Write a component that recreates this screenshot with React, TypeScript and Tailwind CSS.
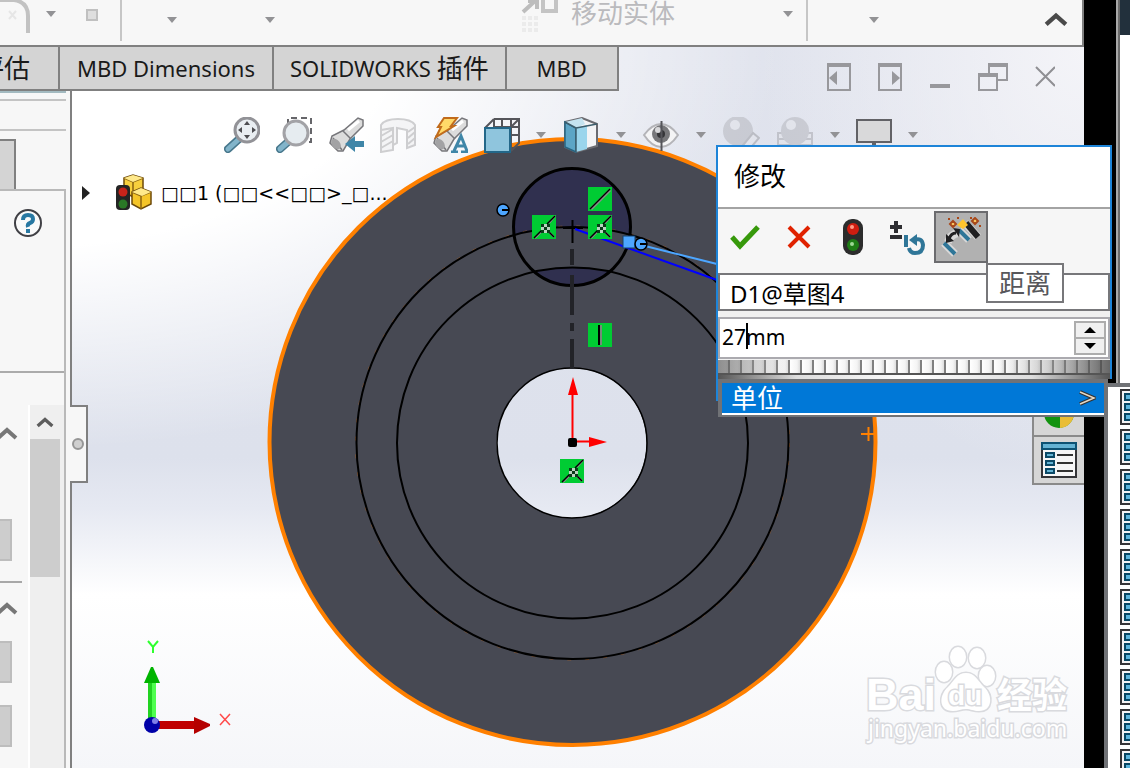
import { useState, type ReactNode } from "react";

const UNIT_ROWS = Array.from({ length: 10 }, (_, i) => i);

function DropArrow({ label }: { label: string }) {
  return (
    <button type="button" aria-label={label} className="grid h-9 w-[10px] shrink-0 place-items-center">
      <svg width="10" height="6" viewBox="0 0 10 6" aria-hidden="true">
        <path d="M0 0h10L5 6z" fill="#929295" />
      </svg>
    </button>
  );
}

function Chevron({ color = "#777", size = 22 }: { color?: string; size?: number }) {
  return (
    <svg width={size} height={size} viewBox="0 0 22 22" fill="none" stroke={color} strokeWidth="4" aria-hidden="true">
      <path d="M2 16l9-8 9 8" />
    </svg>
  );
}

function TrafficLight({ className }: { className?: string }) {
  return (
    <svg viewBox="0 0 20 36" className={className} aria-hidden="true">
      <rect x="0" y="0" width="20" height="36" rx="9" fill="#2c2c2c" />
      <circle cx="10" cy="10" r="6" fill="#cf1d10" />
      <circle cx="9" cy="8" r="2" fill="#ff9b86" />
      <circle cx="10" cy="26" r="6" fill="#1f7d16" />
      <circle cx="9" cy="25" r="2" fill="#9fd896" />
    </svg>
  );
}

function UnitListIcon() {
  return (
    <svg width="36" height="36" viewBox="0 0 36 36" className="shrink-0" aria-hidden="true">
      <rect x="1" y="1" width="34" height="34" fill="#f2f2f4" stroke="#333337" strokeWidth="2" />
      {[5, 15, 25].map((y) => (
        <g key={y}>
          <rect x="5" y={y} width="10" height="6" fill="#5bb4dc" stroke="#074663" strokeWidth="2" />
          <path d={`M19 ${y + 3}h13`} stroke="#333" strokeWidth="2" />
        </g>
      ))}
    </svg>
  );
}

function Ribbon() {
  return (
    <div className="flex h-[47px] shrink-0 overflow-hidden border-r-2 border-b-2 border-[#808080] bg-[#f7f7f7]">
      <div className="flex h-[41px] w-[122px] shrink-0 border-r-2 border-[#c6c6c6]">
        <svg width="46" height="34" viewBox="0 0 46 34" className="shrink-0" fill="none" aria-hidden="true">
          <path d="M0 0h14q14 2 14 16v17" stroke="#c2c2c2" strokeWidth="4" />
          <path d="M9 11l7 8M16 11l-7 8" stroke="#e6e6e6" strokeWidth="2" />
        </svg>
        <div className="-mt-1">
          <DropArrow label="更多草图工具" />
        </div>
        <span className="mt-[9px] ml-[30px] h-3 w-3 border-2 border-[#c0c0c0] bg-[#dedede]" />
      </div>
      <div className="flex h-[41px] min-w-0 flex-1 border-r-2 border-[#c6c6c6] pr-[13px] pl-[45px]">
        <div className="mt-0.5 flex gap-[88px]">
          <DropArrow label="草图命令" />
          <DropArrow label="剪裁命令" />
        </div>
        <svg width="40" height="34" viewBox="0 0 40 34" className="ml-[246px] shrink-0" aria-hidden="true">
          <path d="M2 12L14 1M7 1h9v8" fill="none" stroke="#bdbdbd" strokeWidth="4" />
          <rect x="22" y="-2" width="13" height="13" fill="#f7f7f7" stroke="#c4c4c4" strokeWidth="4" />
          <path d="M1 18h17M1 24h17M1 30h17" stroke="#ebebeb" strokeWidth="4" strokeDasharray="4 2" />
        </svg>
        <button
          type="button"
          className="ml-[10px] h-6 shrink-0 font-['Noto_Sans_CJK_SC',sans-serif] text-[26px] leading-6 text-[#bababd]"
        >
          移动实体
        </button>
        <div className="-mt-1 ml-auto">
          <DropArrow label="移动实体选项" />
        </div>
      </div>
      <div className="flex w-[274px] shrink-0 justify-between pr-[14px] pl-[61px]">
        <div className="mt-0.5">
          <DropArrow label="快速草图" />
        </div>
        <button type="button" aria-label="折叠功能区" className="mt-[7px] h-6">
          <Chevron color="#4a4a4a" size={24} />
        </button>
      </div>
    </div>
  );
}

function TabRow() {
  return (
    <div className="flex h-11 shrink-0">
      <div className="flex border-b-2 border-[#808080] bg-[#d4d4d4] font-['Noto_Sans','Noto_Sans_CJK_SC',sans-serif] text-[22px] leading-[42px] whitespace-nowrap text-[#1a1a1a]">
        <button
          type="button"
          className="flex w-[60px] justify-end overflow-hidden border-r-2 border-[#808080] pr-7 text-[26px]"
        >
          评估
        </button>
        <button type="button" className="border-r-2 border-[#808080] px-[17px]">
          MBD Dimensions
        </button>
        <button type="button" className="flex border-r-2 border-[#808080] px-4">
          SOLIDWORKS&nbsp;<span className="text-[26px]">插件</span>
        </button>
        <button type="button" className="w-28 border-r-2 border-[#808080] text-center">
          MBD
        </button>
      </div>
      <div className="ml-auto flex items-start gap-[27px] pt-4 pr-[29px]">
        <button type="button" aria-label="上一个窗口">
          <svg width="24" height="28" viewBox="0 0 24 28" fill="none" stroke="#98989c" strokeWidth="2" aria-hidden="true">
            <path d="M1 1h22v26H1zM1 3h22" />
            <path d="M2 15l8-7v14z" fill="#98989c" stroke="none" />
          </svg>
        </button>
        <button type="button" aria-label="下一个窗口">
          <svg width="24" height="28" viewBox="0 0 24 28" fill="none" stroke="#98989c" strokeWidth="2" aria-hidden="true">
            <path d="M1 1h22v26H1zM1 3h22" />
            <path d="M22 15l-8-7v14z" fill="#98989c" stroke="none" />
          </svg>
        </button>
        <button type="button" aria-label="最小化">
          <svg width="22" height="28" viewBox="0 0 22 28" aria-hidden="true">
            <path d="M1 21h20v4H1z" fill="#98989c" />
          </svg>
        </button>
        <button type="button" aria-label="还原">
          <svg width="30" height="28" viewBox="0 0 30 28" fill="none" stroke="#98989c" strokeWidth="2" aria-hidden="true">
            <path d="M11 10V1h18v16h-9M10 3h19" />
            <path d="M1 11h18v16H1zM1 13h18" />
          </svg>
        </button>
        <button type="button" aria-label="关闭">
          <svg width="20" height="28" viewBox="0 0 20 28" fill="none" stroke="#8f8f93" strokeWidth="2" aria-hidden="true">
            <path d="M1 4l19 19M20 4L1 23" />
          </svg>
        </button>
      </div>
    </div>
  );
}

function SpinBox() {
  return <div className="h-[42px] w-3 border-2 border-l-0 border-[#bdbdbd] bg-[#cdcdcd]" />;
}

function SidePanel() {
  return (
    <aside className="relative flex w-[72px] shrink-0 flex-col border-r-2 border-[#808080] bg-[#f7f7f7]">
      <div className="mr-1 h-[10px] border-t-2 border-b-2 border-t-[#a3bac0] border-b-[#c4c4c4]" />
      <div className="mr-1 h-[30px] border-b-2 border-[#c4c4c4]" />
      <div className="mt-2 h-[52px] w-4 border-2 border-b-0 border-l-0 border-[#808080] bg-[#d4d4d4]" />
      <div className="-mt-0.5 mr-1 flex min-h-0 flex-1 flex-col border-t-2 border-r-2 border-[#b9b9b9]">
        <div className="h-[182px] shrink-0 border-b-2 border-[#ababab] pt-[17px] pl-[13px]">
          <button type="button" aria-label="帮助">
            <svg width="30" height="30" viewBox="0 0 30 30" aria-hidden="true">
              <circle cx="15" cy="15" r="13" fill="#fafafa" stroke="#404045" strokeWidth="2" />
              <path d="M10 12q0-5 5-5t5 4q0 3-3 4t-2 4" fill="none" stroke="#2878a2" strokeWidth="4" />
              <rect x="13" y="21" width="4" height="4" fill="#2878a2" />
            </svg>
          </button>
        </div>
        <div className="mt-8 flex min-h-0 flex-1">
          <div className="flex w-7 shrink-0 flex-col">
            <div className="mt-[17px] -ml-1 h-[22px]">
              <Chevron />
            </div>
            <div className="mt-[75px]">
              <SpinBox />
            </div>
            <div className="mt-5 h-0.5 w-[22px] bg-[#a8a8a8]" />
            <div className="mt-[14px] -ml-1 h-[22px]">
              <Chevron />
            </div>
            <div className="mt-[22px] flex flex-col gap-[22px]">
              <SpinBox />
              <SpinBox />
            </div>
          </div>
          <div className="flex flex-1 flex-col border-l-2 border-white bg-[#efefef]">
            <button type="button" aria-label="向上滚动" className="grid h-[34px] place-items-center pr-1">
              <Chevron color="#5c5c5c" size={18} />
            </button>
            <div className="mr-1 h-[138px] bg-[#cdcdcd]" />
          </div>
        </div>
      </div>
      <button
        type="button"
        aria-label="折叠面板"
        className="absolute top-[314px] left-[70px] z-10 flex h-[78px] w-[18px] items-center border-2 border-l-0 border-[#808080] bg-[#f7f7f7] pl-0.5"
      >
        <span className="h-3 w-3 rounded-full border-2 border-[#969696] bg-[#cfcfcf]" />
      </button>
    </aside>
  );
}

function Relation({ x, y, kind }: { x: number; y: number; kind: "coincident" | "vertical" | "line" }) {
  return (
    <g transform={`translate(${x} ${y})`}>
      <rect width="24" height="24" fill="#00cc33" />
      {kind === "vertical" && (
        <>
          <path d="M13 2v20" stroke="#77887a" strokeWidth="2" />
          <path d="M11 2v20" stroke="#000" strokeWidth="2" />
        </>
      )}
      {kind === "line" && (
        <>
          <path d="M3 22L22 3" stroke="#8a8a8a" strokeWidth="3" />
          <path d="M2 22L22 2" stroke="#000" strokeWidth="1.5" />
        </>
      )}
      {kind === "coincident" && (
        <>
          <path d="M3 23l6-6M17 8l6-7M17 17l5 5" stroke="#8a8a8a" strokeWidth="2" />
          <path d="M2 23l8-8M15 9l8-8M16 16l6 6" stroke="#000" strokeWidth="1.5" />
          <rect x="9" y="9" width="9" height="9" fill="#0a3a18" />
          <path d="M12 9h3v3h3v3h-3v3h-3v-3H9v-3h3z" fill="#b9d2bf" />
          <rect x="12" y="12" width="3" height="3" fill="#0a3a18" />
        </>
      )}
    </g>
  );
}

function Handle({ x, y }: { x: number; y: number }) {
  return (
    <g>
      <circle cx={x} cy={y} r="6" fill="#4da6ff" stroke="#000" strokeWidth="1.5" />
      <path d={`M${x - 1} ${y}h7`} stroke="#000" strokeWidth="2" />
    </g>
  );
}

function Sketch() {
  return (
    <svg
      width="1012"
      height="677"
      viewBox="72 91 1012 677"
      className="absolute top-0 left-0"
      role="img"
      aria-label="草图4"
    >
      <defs>
        <clipPath id="small">
          <circle cx="572" cy="227" r="58" />
        </clipPath>
      </defs>
      <path
        d="M572 140a302 302 0 1 0 1 0zM572 368a75 75 0 1 1-1 0z"
        fill="#474953"
        fillRule="evenodd"
      />
      <circle cx="572.5" cy="442" r="303" fill="none" stroke="#ff8000" strokeWidth="4" />
      <circle cx="572" cy="227" r="58" fill="#30304f" />
      <g clipPath="url(#small)">
        <circle cx="572.5" cy="443" r="216" fill="#474953" />
        <circle cx="572.5" cy="443" r="175.5" fill="#30304f" />
      </g>
      <g fill="none" stroke="#000">
        <circle cx="572" cy="443" r="75" strokeWidth="1.5" />
        <circle cx="572.5" cy="443" r="175.5" strokeWidth="2" />
        <circle cx="572.5" cy="443" r="217" stroke="#8b5a34" strokeWidth="1" strokeDasharray="4 14" />
        <circle cx="572.5" cy="443" r="216" strokeWidth="2" />
        <circle cx="572" cy="227" r="58.5" strokeWidth="3" />
      </g>
      <path d="M572 249v16M572 275v40M572 323v8M572 339v30" stroke="#222328" strokeWidth="4" />
      <path d="M572.5 220v23M563 228h20" stroke="#000" strokeWidth="2" />
      <path d="M575 229l142 51" stroke="#0000ff" strokeWidth="2" />
      <path d="M645 246l72 18" stroke="#4da6ff" strokeWidth="2" />
      <rect x="623" y="236" width="12" height="12" fill="#4da6ff" stroke="#17406b" />
      <Handle x={641} y={244} />
      <Handle x={503} y={210} />
      <Relation x={532} y={215} kind="coincident" />
      <Relation x={588} y={187} kind="line" />
      <Relation x={588} y={215} kind="coincident" />
      <Relation x={588} y={323} kind="vertical" />
      <Relation x={560} y={459} kind="coincident" />
      <path d="M572.5 441V390M573 441.5h20" stroke="#f00" strokeWidth="2" />
      <path d="M568 395l5-18 5 18zM589 437l18 5-18 5z" fill="#f00" />
      <rect x="568" y="438" width="9" height="9" rx="2" fill="#000" />
      <path d="M861 434h14M868.5 427v14" stroke="#ff8000" strokeWidth="2" />

      {/* axis triad */}
      <path d="M148 682h8v38h-8z" fill="#21d321" />
      <path d="M152 682h4v38h-4z" fill="#4fff4f" />
      <path d="M144 683l7-16h2l7 16z" fill="#00b400" />
      <path d="M158 721h38v8h-38z" fill="#c00000" />
      <path d="M194 717l16 7v2l-16 8z" fill="#b50000" />
      <circle cx="152" cy="725" r="8" fill="#0000a8" />
      <circle cx="155" cy="721" r="3" fill="#7f7fe8" />
      <path d="M148 641l5 6 5-6M153 647v6" fill="none" stroke="#2fff2f" strokeWidth="2" />
      <path d="M220 714l10 11M230 714l-10 11" stroke="#ff4a4a" strokeWidth="1.5" />

      {/* watermark */}
      <g fill="#fff" stroke="#d9dade" strokeWidth="3" className="[paint-order:stroke]">
        <text x="866" y="710" fontFamily="Liberation Sans, sans-serif" fontWeight="700" fontSize="45">
          Bai
        </text>
        <ellipse cx="944" cy="672" rx="8" ry="10" />
        <ellipse cx="958" cy="657" rx="8" ry="10" />
        <ellipse cx="977" cy="658" rx="8" ry="10" />
        <ellipse cx="987" cy="676" rx="8" ry="10" />
        <path d="M966 673c9 0 12 8 18 14 9 8 9 24-5 24-6 0-8-2-13-2s-8 2-13 2c-15 0-14-16-5-24 6-6 9-14 18-14z" />
        <text x="948" y="705" fontFamily="Liberation Sans, sans-serif" fontWeight="700" fontSize="28">
          du
        </text>
        <text x="997" y="708" fontFamily="Noto Sans CJK SC, sans-serif" fontWeight="700" fontSize="35">
          经验
        </text>
        <text x="868" y="737" fontFamily="Noto Sans, sans-serif" fontSize="23">
          jingyan.baidu.com
        </text>
      </g>
    </svg>
  );
}

type ViewButtonProps = { label: string; wide?: boolean; faded?: boolean; children: ReactNode };

function ViewButton({ label, wide, faded, children }: ViewButtonProps) {
  return (
    <button type="button" aria-label={label} className={faded ? "shrink-0 opacity-35" : "shrink-0"}>
      <svg width={wide ? 38 : 36} height="36" viewBox="0 0 36 36" fill="none" aria-hidden="true">
        {children}
      </svg>
    </button>
  );
}

function Flashlight() {
  return (
    <>
      <path d="M2 26l2-7 12-6 14-12 5 2v6L22 22l-7 12h-5z" fill="#dcdcdc" stroke="#77777b" strokeWidth="1.5" />
      <path d="M5 21l9 12M15 14l8 8" stroke="#77777b" strokeWidth="1.5" />
      <path d="M20 13L31 4" stroke="#fff" strokeWidth="3" />
      <ellipse cx="8" cy="27" rx="4" ry="6" transform="rotate(-38 8 27)" fill="#a2a2a4" />
    </>
  );
}

function ViewToolbar() {
  return (
    <div className="relative flex gap-4 pt-[26px] pl-[152px]">
      <ViewButton label="整屏显示全图">
        <path d="M4 32L15 22" stroke="#47778c" strokeWidth="8" strokeLinecap="round" />
        <path d="M4 32L14 23" stroke="#82b4ca" strokeWidth="5" strokeLinecap="round" />
        <circle cx="23" cy="13" r="12" fill="#e9eef2" stroke="#929297" strokeWidth="3" />
        <path d="M23 4l3 4h-6zM23 22l3-4h-6zM14 13l4-3v6zM32 13l-4-3v6z" fill="#4c4c50" />
      </ViewButton>
      <ViewButton label="局部放大">
        <path d="M12 8V1h23v24h-5" stroke="#66666a" strokeWidth="2" strokeDasharray="6 4" />
        <path d="M4 32l9-8" stroke="#47778c" strokeWidth="8" strokeLinecap="round" />
        <path d="M4 32l8-7" stroke="#82b4ca" strokeWidth="5" strokeLinecap="round" />
        <circle cx="20" cy="16" r="12" fill="#e6ecf0" stroke="#a2a2a6" strokeWidth="3" />
      </ViewButton>
      <ViewButton label="上一视图">
        <Flashlight />
        <path d="M36 24v6h-9v5l-10-8 10-8v5z" fill="#3f86a8" />
      </ViewButton>
      <ViewButton label="剖面视图">
        <g opacity="0.45">
          <path d="M1 8q4-6 17-6t17 6v20l-8 3V13l-10-2v15l-4 2v5L1 35z" fill="#ececee" stroke="#98989b" strokeWidth="2" />
          <path d="M1 13l12-2v22M1 19l12-7M1 25l12-7M1 31l12-7M28 21l7-6M28 27l7-6M28 15l7-5" stroke="#98989b" strokeWidth="2" />
        </g>
      </ViewButton>
      <ViewButton label="动态注解视图">
        <Flashlight />
        <path d="M12 1h13l-6 8h3L4 20l5-10H6z" fill="#ffd969" stroke="#c16b1b" strokeWidth="2" />
        <path d="M19 35h7M29 35h8M22 34l7-15 6 15M24 29h9" stroke="#3f86a8" strokeWidth="3" />
      </ViewButton>
      <ViewButton label="视图定向">
        <path d="M10 2h25v24l-8 8M10 2v9M18 2v9M27 2v32M10 10h25M27 18h8M1 11l9-9M26 11l9-9" stroke="#55555a" strokeWidth="2" />
        <rect x="1" y="11" width="25" height="24" fill="#8fc5dd" stroke="#236789" strokeWidth="2" />
      </ViewButton>
      <DropArrow label="视图定向选项" />
      <ViewButton label="显示样式" wide>
        <path d="M2 5l17-4 15 6v22l-21 6L2 30z" fill="#f3f3f5" stroke="#6b6b70" strokeWidth="2" />
        <path d="M2 5l11 6v24L2 30z" fill="#5ca5c6" stroke="#276582" strokeWidth="1.5" />
        <path d="M13 11l11-3v24l-11 3z" fill="#9bd5ec" />
        <path d="M2 5l17-4 3 6-9 4z" fill="#c4e3f0" />
        <path d="M13 11l21-4M13 11v24M2 5l11 6" stroke="#3c5e6d" strokeWidth="1.5" />
      </ViewButton>
      <DropArrow label="显示样式选项" />
      <ViewButton label="隐藏/显示项目" wide>
        <path d="M1 18Q9 7 18 7t17 11q-8 12-17 12T1 18z" fill="#f4f4f5" stroke="#b4b4b8" strokeWidth="2" />
        <circle cx="18" cy="17" r="9" fill="#77777a" />
        <circle cx="18" cy="17" r="4" fill="#353538" />
        <circle cx="15" cy="13" r="3" fill="#d8d8da" />
        <path d="M18.5 4v30" stroke="#55555a" strokeWidth="2" />
      </ViewButton>
      <DropArrow label="隐藏/显示选项" />
      <ViewButton label="编辑外观" wide faded>
        <circle cx="15" cy="14" r="15" fill="#9d9da3" />
        <circle cx="12" cy="8" r="5" fill="#e4e4e8" />
        <path d="M16 33l14-17 6 5-12 14z" fill="#e4e4e8" stroke="#77777b" strokeWidth="2" />
      </ViewButton>
      <ViewButton label="应用布景" wide faded>
        <path d="M1 16h34v18H1zM1 22h34M1 28h34" fill="#e4e4e8" stroke="#88888c" strokeWidth="2" />
        <circle cx="18" cy="14" r="14" fill="#9d9da3" />
        <circle cx="14" cy="8" r="5" fill="#e4e4e8" />
      </ViewButton>
      <DropArrow label="布景选项" />
      <ViewButton label="视图设定">
        <path d="M1 3h34v22H1z" fill="#d9d9da" stroke="#626266" strokeWidth="2" />
        <path d="M18 25v7M10 33h17" stroke="#626266" strokeWidth="4" />
      </ViewButton>
      <DropArrow label="视图设定选项" />
    </div>
  );
}

function FeatureTreeRow() {
  return (
    <button type="button" className="relative mt-[22px] ml-[10px] flex h-9 items-center">
      <svg width="9" height="14" viewBox="0 0 9 14" aria-hidden="true">
        <path d="M0 0l8 7-8 7z" fill="#222" />
      </svg>
      <svg width="38" height="38" viewBox="0 0 38 38" className="ml-6" aria-hidden="true">
        <path d="M9 4l9-3 10 3v14l-10 5-9-5z" fill="#f7cf3d" stroke="#6d4a0a" strokeWidth="1.5" />
        <path d="M9 4l9 4 10-4M18 8v14" fill="none" stroke="#8b6310" strokeWidth="1.5" />
        <path d="M9 4l9-3 10 3-10 4zM17 18l9-4 10 4-10 4z" fill="#ffe98b" />
        <path d="M17 18l9-4 10 4v12l-10 5-9-5z" fill="#f5c529" stroke="#6d4a0a" strokeWidth="1.5" />
        <path d="M17 18l9 4 10-4M26 22v13" fill="none" stroke="#8b6310" strokeWidth="1.5" />
        <path d="M17 18l9-4 10 4-9 4z" fill="#ffe98b" />
        <rect x="1" y="11" width="14" height="25" rx="4" fill="#242424" />
        <circle cx="8" cy="18" r="4.5" fill="#c8231a" />
        <circle cx="8" cy="30" r="4.5" fill="#2a7826" />
      </svg>
      <span className="ml-2 font-['DejaVu_Sans',sans-serif] text-[19px] leading-9 whitespace-nowrap text-black">
        □□1 (□□&lt;&lt;□□&gt;_□...
      </span>
    </button>
  );
}

function TaskPane() {
  return (
    <div className="absolute top-[275px] right-0 flex w-[52px] flex-col border-2 border-r-0 border-[#8a8a8a] bg-[#d6d6d6]">
      <button type="button" aria-label="外观、布景和贴图" className="grid h-[69px] place-items-end justify-center border-b-2 border-[#8a8a8a] pb-1.5">
        <svg width="32" height="32" viewBox="0 0 32 32" aria-hidden="true">
          <circle cx="16" cy="16" r="15" fill="#13930f" />
          <path d="M17 14h14a15 15 0 0 1-14 17z" fill="#e9bd35" />
        </svg>
      </button>
      <button type="button" aria-label="自定义属性" className="grid h-[46px] place-items-center">
        <svg width="36" height="36" viewBox="0 0 36 36" aria-hidden="true">
          <path d="M1 1h34v34H1z" fill="#f6f6f7" stroke="#343438" strokeWidth="2" />
          <path d="M1 1h34v6H1z" fill="#64b3d4" stroke="#0d5273" strokeWidth="2" />
          {[11, 19, 27].map((y) => (
            <g key={y}>
              <rect x="5" y={y} width="8" height="4" fill="#64b3d4" stroke="#0b4967" strokeWidth="2" />
              <path d={`M16 ${y + 2}h16`} stroke="#333" strokeWidth="2" />
            </g>
          ))}
        </svg>
      </button>
    </div>
  );
}

function ModifyDialog() {
  const [name, setName] = useState("D1@草图4");
  const [value, setValue] = useState("27mm");

  return (
    <div
      role="dialog"
      aria-labelledby="modify-title"
      className="absolute top-[145px] left-[716px] z-20 w-[396px] font-['Noto_Sans','Noto_Sans_CJK_SC',sans-serif]"
    >
      <div className="border-2 border-b-0 border-[#1d84d8] bg-[#f0f0f0]">
        <h2
          id="modify-title"
          className="h-[62px] border-b-2 border-[#a3a3a3] bg-white pl-4 text-[26px] leading-[58px] text-black"
        >
          修改
        </h2>
        <div className="flex h-16 bg-[#f6f6f6] pt-0.5">
          <button type="button" aria-label="确定" className="grid h-[52px] w-[54px] place-items-center">
            <svg width="30" height="26" viewBox="0 0 30 26" fill="none" aria-hidden="true">
              <path d="M2 13l8 9L28 3" stroke="#37990b" strokeWidth="5" />
            </svg>
          </button>
          <button type="button" aria-label="取消" className="grid h-[52px] w-[54px] place-items-center">
            <svg width="24" height="24" viewBox="0 0 24 24" fill="none" aria-hidden="true">
              <path d="M2 2l20 20M22 2L2 22" stroke="#e02200" strokeWidth="4" />
            </svg>
          </button>
          <button type="button" aria-label="重建模型" className="grid h-[52px] w-[54px] place-items-center">
            <TrafficLight className="h-9 w-5" />
          </button>
          <button type="button" aria-label="反向" className="grid h-[52px] w-[54px] place-items-center">
            <svg width="36" height="36" viewBox="0 0 36 36" fill="none" aria-hidden="true">
              <path d="M1 8h12M7 2v12M1 18h12" stroke="#2e2e32" strokeWidth="4" />
              <path d="M17 16v12" stroke="#2f7698" strokeWidth="4" />
              <path d="M25 21q8-3 9 5 0 8-8 8-5 0-6-5" stroke="#2f7698" strokeWidth="4" />
              <path d="M20 21l8-6v12z" fill="#2f7698" />
            </svg>
          </button>
          <button
            type="button"
            aria-label="标注"
            aria-pressed="true"
            className="grid h-[52px] w-[54px] place-items-center border-2 border-[#6b6b6e] bg-[#b1b1b1]"
          >
            <svg width="40" height="40" viewBox="0 0 40 40" fill="none" aria-hidden="true">
              <g stroke="#e8e8e8" strokeWidth="8" opacity="0.7">
                <path d="M3 26l11 11M18 13l10 10M24 6l13 14M7 25q3-8 10-9" />
              </g>
              <path d="M3 26l11 11M18 13l10 10" stroke="#2f7698" strokeWidth="4" />
              <path d="M25 6l12 14" stroke="#202022" strokeWidth="6" />
              <path d="M8 22q2-6 7-6" stroke="#202022" strokeWidth="3" />
              <path d="M12 11l7 1-1 8zM5 17v9l8-2z" fill="#202022" />
              <path d="M16 8l6-6 5 6-5 4z" fill="#ffc42e" />
              <path
                d="M9 7l3-3 3 3-3 3zM31 4l3-3 3 3-3 3z"
                fill="#ffd36b"
                stroke="#a8481a"
                strokeWidth="2"
              />
              <path d="M7 2h2M16 1h2M38 9h2M29 1h2" stroke="#a8481a" strokeWidth="2" />
            </svg>
          </button>
        </div>
        <label className="block">
          <span className="sr-only">名称</span>
          <input
            value={name}
            onChange={(e) => setName(e.target.value)}
            className="block h-[38px] w-full border-2 border-[#77777a] bg-white pl-[10px] text-[24px] text-black outline-none"
          />
        </label>
        <div className="relative mt-1.5 flex h-[42px] border-2 border-[#abaaaf] bg-white">
          <label className="min-w-0 flex-1">
            <span className="sr-only">尺寸值</span>
            <input
              value={value}
              onChange={(e) => setValue(e.target.value)}
              className="block h-9 w-full bg-transparent pl-0.5 text-[21px] text-black outline-none"
            />
          </label>
          <span className="absolute top-1 left-[26px] h-[26px] w-0.5 bg-black" />
          <div className="my-0.5 mr-0.5 flex w-8 flex-col border-2 border-[#adadad] bg-[#f0f0f0]">
            <button type="button" aria-label="增加" className="grid flex-1 place-items-center border-b-2 border-[#adadad]">
              <svg width="12" height="6" viewBox="0 0 12 6" aria-hidden="true">
                <path d="M0 6h12L6 0z" fill="#000" />
              </svg>
            </button>
            <button type="button" aria-label="减少" className="grid flex-1 place-items-center">
              <svg width="12" height="6" viewBox="0 0 12 6" aria-hidden="true">
                <path d="M0 0h12L6 6z" fill="#000" />
              </svg>
            </button>
          </div>
        </div>
        {/* thumbwheel */}
        <div className="mt-px h-[15px] border-b-2 border-[#555] bg-[linear-gradient(90deg,#555555aa,#99999966_10%,#ffffff00_18%,#ffffff00_72%,#99999966_84%,#444444cc),repeating-linear-gradient(90deg,#ffffff_0,#f4f4f4_7px,#dddddd_10px,#808080_10px,#808080_12px)]" />
        <div className="h-1 bg-[linear-gradient(90deg,#555,#ddd_20%,#fff_50%,#ddd_80%,#555)]" />
      </div>
      <div className="absolute top-[234px] left-0 h-[22px] w-0.5 bg-[#1d84d8]" />
      <div className="mr-1 ml-0.5 border-4 border-b-2 border-[#707276] bg-white pb-0.5">
        <button
          type="button"
          className="flex h-[30px] w-full items-center justify-between bg-[#0078d7] pr-2 pl-[9px] text-[26px] leading-[30px] text-white"
        >
          单位
          <svg width="17" height="16" viewBox="0 0 17 16" fill="none" aria-hidden="true">
            <path d="M1 2l14 6-14 6" stroke="#333" strokeWidth="4" />
            <path d="M1 2l14 6-14 6" stroke="#e7d9c5" strokeWidth="1.5" />
          </svg>
        </button>
      </div>
      <div
        role="tooltip"
        className="absolute top-[118px] left-[270px] border-2 border-[#77777a] bg-white px-[11px] text-[26px] leading-9 text-[#57575b]"
      >
        距离
      </div>
    </div>
  );
}

function UnitSubmenu() {
  return (
    <ul className="absolute top-[383px] right-0 bottom-0 left-[1104px] z-30 overflow-hidden border-t-4 border-l-4 border-[#707276] bg-white pt-0.5">
      {UNIT_ROWS.map((row) => (
        <li key={row} className="h-10 pl-3">
          <UnitListIcon />
        </li>
      ))}
    </ul>
  );
}

export default function App() {
  return (
    <div className="relative flex h-screen w-full overflow-hidden bg-white">
      <div className="flex min-w-0 flex-1 flex-col">
        <Ribbon />
        <div className="flex min-h-0 flex-1 flex-col bg-[radial-gradient(ellipse_72%_56%_at_0_0,#ffffff_50%,#ffffff00_100%),radial-gradient(ellipse_30%_60%_at_100%_0,#f4f4f8_0%,#f4f4f800_100%),linear-gradient(180deg,#e0e3ed_0%,#dde1ec_57%,#e6e9f2_64%,#ffffff_76%,#f5f6f9_100%)]">
          <TabRow />
          <div className="flex min-h-0 flex-1">
            <SidePanel />
            <main className="relative min-w-0 flex-1 overflow-hidden">
              <Sketch />
              <ViewToolbar />
              <FeatureTreeRow />
              <TaskPane />
            </main>
          </div>
        </div>
      </div>
      <div className="w-8 shrink-0 bg-black" />
      <div className="w-1 shrink-0 border-r-2 border-[#6b6b6b] bg-[#a8a8a8]" />
      <div className="w-[10px] shrink-0">
        <div className="h-[35px] bg-[#22303c]" />
      </div>
      <ModifyDialog />
      <UnitSubmenu />
    </div>
  );
}
